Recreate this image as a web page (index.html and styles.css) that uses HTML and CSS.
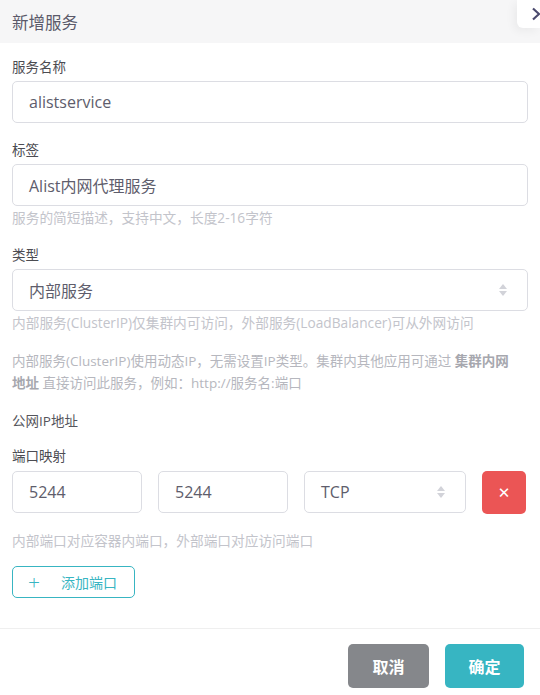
FILE: index.html
```html
<!DOCTYPE html>
<html>
<head>
  <title>新增服务</title>
  <meta name="viewport" content="width=device-width, initial-scale=1.0" />
  <link rel="stylesheet" href="styles.css">
</head>
<body>

  <div class="drawer">
    <div class="drawer-header">
      <h2>新增服务</h2>
      <div class="close-tab">
        <svg width="10" height="14" viewBox="0 0 10 14"><path d="M2 1.5 L8 7 L2 12.5" fill="none" stroke="#4b4a6e" stroke-width="2.2"/></svg>
      </div>
    </div>

    <div class="form">
      <div class="field">
        <label>服务名称</label>
        <div class="input">alistservice</div>
      </div>

      <div class="field">
        <label>标签</label>
        <div class="input">Alist内网代理服务</div>
        <div class="hint">服务的简短描述，支持中文，长度2-16字符</div>
      </div>

      <div class="field">
        <label>类型</label>
        <div class="input select">内部服务<span class="arrows"></span></div>
        <div class="hint">内部服务(ClusterIP)仅集群内可访问，外部服务(LoadBalancer)可从外网访问</div>
      </div>

      <div class="info">
        内部服务(ClusterIP)使用动态IP，无需设置IP类型。集群内其他应用可通过 <b>集群内网</b><b>地址</b> 直接访问此服务，例如：http://服务名:端口
      </div>

      <div class="field tight">
        <label class="dark">公网IP地址</label>
      </div>

      <div class="field port-field">
        <label>端口映射</label>
        <div class="port-row">
          <div class="input">5244</div>
          <div class="input">5244</div>
          <div class="input select">TCP<span class="arrows"></span></div>
          <button class="btn-delete">✕</button>
        </div>
        <div class="hint gap">内部端口对应容器内端口，外部端口对应访问端口</div>
      </div>

      <button class="btn-add"><span class="plus">+</span>添加端口</button>
    </div>

    <div class="drawer-footer">
      <button class="btn btn-cancel">取消</button>
      <button class="btn btn-ok">确定</button>
    </div>
  </div>

</body>
</html>
```

FILE: styles.css
```css
body {
  margin: 0;
  font-family: "Open Sans", "Noto Sans CJK SC", sans-serif;
  background: #fff;
  color: #4a4a4a;
}

.drawer {
  width: 540px;
  height: 695px;
  display: flex;
  flex-direction: column;
}

.drawer-header {
  height: 43px;
  background: #f6f6f7;
  display: flex;
  align-items: center;
  padding-left: 12px;
  position: relative;
}

.drawer-header h2 {
  margin: 0;
  font-size: 16.5px;
  font-weight: normal;
  color: #5b5a6a;
}

.close-tab {
  position: absolute;
  top: 0;
  right: 0;
  width: 23px;
  height: 28px;
  background: #fff;
  border-bottom-left-radius: 6px;
  box-shadow: -3px 3px 10px rgba(0, 0, 0, 0.05);
  display: flex;
  align-items: center;
  padding-left: 14px;
  box-sizing: border-box;
  overflow: hidden;
}

.close-tab svg {
  flex-shrink: 0;
}

.form {
  padding: 14px 12px 0 12px;
  flex: 1;
}

.field {
  margin-bottom: 17px;
}

.field.tight {
  margin-bottom: 15px;
}

.field.port-field {
  margin-bottom: 15px;
}

label {
  display: block;
  font-size: 13.5px;
  line-height: 20px;
  color: #4c4c52;
  margin-bottom: 4px;
}

label.dark {
  color: #55555c;
  margin-bottom: 0;
}

.input {
  height: 42px;
  box-sizing: border-box;
  border: 1px solid #dcdde3;
  border-radius: 5px;
  padding: 0 16px;
  display: flex;
  align-items: center;
  font-size: 16px;
  color: #5e5d6c;
  position: relative;
}

.select .arrows {
  position: absolute;
  right: 19px;
  top: 14px;
  width: 9px;
  height: 13px;
}

.select .arrows::before,
.select .arrows::after {
  content: "";
  position: absolute;
  left: 0;
  border-left: 4.5px solid transparent;
  border-right: 4.5px solid transparent;
}

.select .arrows::before {
  top: 0;
  border-bottom: 5px solid #d2d3d9;
}

.select .arrows::after {
  top: 7px;
  border-top: 5px solid #d2d3d9;
}

.hint {
  font-size: 13.7px;
  line-height: 20px;
  color: #c3c4cb;
  margin-top: 2px;
}

.hint.gap {
  margin-top: 17px;
}

.info {
  font-size: 13.5px;
  line-height: 22px;
  color: #b6b7be;
  margin-bottom: 17px;
  padding-right: 10px;
}

.info b {
  color: #a6a7ae;
}

.port-row {
  display: flex;
  gap: 16px;
  margin-top: 5px;
}

.port-row .input {
  width: 130px;
}

.port-row .select {
  width: 162px;
}

.btn-delete {
  width: 44px;
  height: 43px;
  border: none;
  border-radius: 5px;
  background: #eb5555;
  color: #fff;
  font-size: 15px;
  font-weight: bold;
  font-family: "DejaVu Sans", sans-serif;
  padding: 0;
}

.btn-add {
  height: 32px;
  width: 123px;
  border: 1px solid #38b5c2;
  border-radius: 5px;
  background: #fff;
  color: #38b5c2;
  font-size: 14px;
  font-family: "Open Sans", "Noto Sans CJK SC", sans-serif;
  display: flex;
  align-items: center;
  padding: 0 0 0 15px;
}

.btn-add .plus {
  font-size: 21px;
  font-weight: 300;
  margin-right: 21px;
  line-height: 1;
}

.drawer-footer {
  border-top: 1px solid #efefef;
  height: 67px;
  display: flex;
  justify-content: flex-end;
  align-items: flex-start;
  padding: 15px 16px 0 0;
  box-sizing: border-box;
  gap: 16px;
}

.btn {
  height: 44px;
  width: 81px;
  border: none;
  border-radius: 5px;
  color: #fff;
  font-size: 16px;
  font-weight: bold;
  font-family: "Noto Sans CJK SC", sans-serif;
}

.btn-cancel {
  background: #85878b;
}

.btn-ok {
  width: 79px;
  background: #37b5c2;
}
```
